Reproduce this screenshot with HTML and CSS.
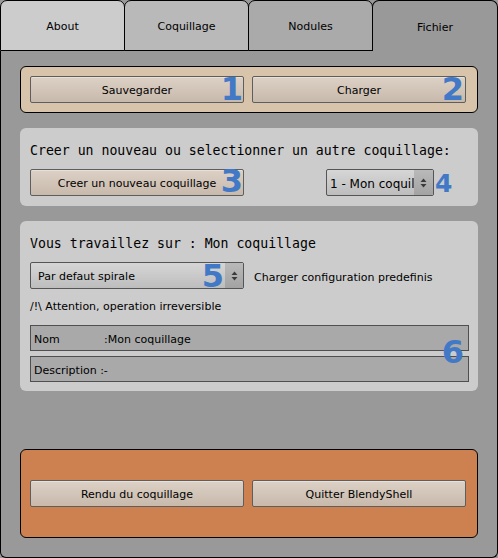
FILE: index.html
```html
<!DOCTYPE html>
<html>
<head>
<meta charset="utf-8">
<link rel="stylesheet" href="styles.css">
</head>
<body>
<div class="app">
  <div class="tabs">
    <div class="tab tab-about">About</div>
    <div class="tab tab-coq">Coquillage</div>
    <div class="tab tab-nod">Nodules</div>
    <div class="tab tab-fichier active">Fichier</div>
  </div>
  <div class="panel">
    <section class="box box-tan">
      <div class="btn-row">
        <div class="btn">Sauvegarder<span class="num num-1">1</span></div>
        <div class="btn">Charger<span class="num num-2">2</span></div>
      </div>
    </section>

    <section class="box box-gray box-new">
      <p class="mono">Creer un nouveau ou selectionner un autre coquillage:</p>
      <div class="new-row">
        <div class="btn">Creer un nouveau coquillage<span class="num num-3">3</span></div>
        <div class="select select-small">
          <span class="select-text">1 - Mon coquillage</span>
          <span class="select-arrow"><svg width="7" height="10" viewBox="0 0 7 10"><path d="M3.5 0.5 L6.5 4 H0.5Z M0.5 6 H6.5 L3.5 9.5Z" fill="#3a3a3a"/></svg></span>
          <span class="num num-4">4</span>
        </div>
      </div>
    </section>

    <section class="box box-gray box-work">
      <p class="mono">Vous travaillez sur : Mon coquillage</p>
      <div class="preset-row">
        <div class="select select-wide">
          <span class="select-text">Par defaut spirale</span>
          <span class="select-arrow"><svg width="7" height="10" viewBox="0 0 7 10"><path d="M3.5 0.5 L6.5 4 H0.5Z M0.5 6 H6.5 L3.5 9.5Z" fill="#3a3a3a"/></svg></span>
          <span class="num num-5">5</span>
        </div>
        <span class="hint">Charger configuration predefinis</span>
      </div>
      <p class="warn">/!\ Attention, operation irreversible</p>
      <div class="fields">
        <div class="field"><span class="field-label">Nom</span>:Mon coquillage</div>
        <div class="field">Description :-</div>
        <span class="num num-6">6</span>
      </div>
    </section>

    <section class="box box-orange">
      <div class="btn-row">
        <div class="btn">Rendu du coquillage</div>
        <div class="btn">Quitter BlendyShell</div>
      </div>
    </section>
  </div>
</div>
</body>
</html>
```

FILE: styles.css
```css
* { box-sizing: border-box; margin: 0; padding: 0; }
html, body { width: 498px; height: 558px; overflow: hidden; }
body {
  font-family: "DejaVu Sans", "Liberation Sans", sans-serif;
  font-size: 11px;
  color: #000;
  background: #999999;
}
.app { width: 498px; height: 558px; display: flex; flex-direction: column; }

.tabs { display: flex; height: 51px; flex: none; }
.tab {
  width: 125px;
  margin-right: -1px;
  border: 1px solid #000;
  border-radius: 7px 7px 0 0;
  display: flex;
  align-items: center;
  justify-content: center;
  padding-top: 1px;
}
.tab-about { background: #cccccc; }
.tab-coq { background: #b9b9b9; }
.tab-nod { background: #aaaaaa; }
.tab.active {
  width: 126px;
  margin-right: 0;
  border-bottom: none;
  background: #999999;
  padding-top: 2px;
}

.panel {
  flex: 1;
  background: #999999;
  border: 1px solid #000;
  border-top: none;
  border-radius: 0 0 6px 6px;
  padding: 15px 19px 19px;
  display: flex;
  flex-direction: column;
  gap: 15px;
}

.box { border-radius: 6px; }
.box-tan { background: #d8c4ab; border: 1px solid #000; padding: 9px; }
.box-orange { background: #cd8150; border: 1px solid #000; padding: 30px 9px; margin-top: auto; }
.box-gray { background: #cccccc; padding: 15px 10px 10px; }
.box-work { padding-bottom: 9px; }

.btn-row { display: flex; gap: 8px; }
.btn {
  position: relative;
  width: 214px;
  height: 27px;
  flex: none;
  border: 1px solid #5e5e5e;
  border-radius: 2px;
  background: linear-gradient(#ddd0c4, #c7baad);
  box-shadow: inset 0 1px 0 rgba(255,255,255,0.35);
  display: flex;
  align-items: center;
  justify-content: center;
  padding-top: 2px;
}

.mono {
  font-family: "DejaVu Sans Mono", "Liberation Mono", monospace;
  font-size: 13.2px;
  line-height: 16px;
}

.new-row { margin-top: 10px; display: flex; align-items: center; }

.select {
  position: relative;
  height: 27px;
  border: 1px solid #555;
  border-radius: 2px;
  background: linear-gradient(#d6d6d6, #bdbdbd);
  display: flex;
  align-items: center;
  flex: none;
}
.select-text { flex: 1; overflow: hidden; white-space: nowrap; padding-top: 2px; }
.select-arrow {
  flex: none;
  align-self: stretch;
  background: linear-gradient(#b9b9b9, #a3a3a3);
  display: flex;
  align-items: center;
  justify-content: center;
}
.select-small { width: 108px; margin-left: auto; margin-right: 34px; }
.select-small .select-text { padding-left: 3px; font-size: 12px; }
.select-small .select-arrow { width: 19px; }
.select-wide { width: 214px; }
.select-wide .select-text { padding-left: 7px; }
.select-wide .select-arrow { width: 18px; }

.preset-row { margin-top: 10px; display: flex; align-items: center; gap: 10px; }
.hint { padding-top: 3px; }
.warn { margin-top: 10px; line-height: 14px; padding-top: 1px; }

.fields {
  position: relative;
  margin-top: 11px;
  width: 439px;
  display: flex;
  flex-direction: column;
  gap: 5px;
}
.field {
  height: 26px;
  border: 1px solid #4f4f4f;
  background: #a9a9a9;
  padding-left: 3px;
  padding-top: 2px;
  display: flex;
  align-items: center;
}
.field-label { display: inline-block; width: 70px; }

.num {
  position: absolute;
  font-family: "DejaVu Sans", sans-serif;
  font-weight: bold;
  font-size: 32px;
  line-height: 32px;
  color: #4279c6;
}
.num-1 { top: -4px; right: 0; }
.num-2 { top: -4px; right: 1px; }
.num-3 { top: -5px; right: 0; }
.num-4 { font-size: 25px; line-height: 25px; top: 1px; left: calc(100% + 2px); }
.num-5 { top: -3px; right: 19px; }
.num-6 { top: 11px; right: 5px; }
```
